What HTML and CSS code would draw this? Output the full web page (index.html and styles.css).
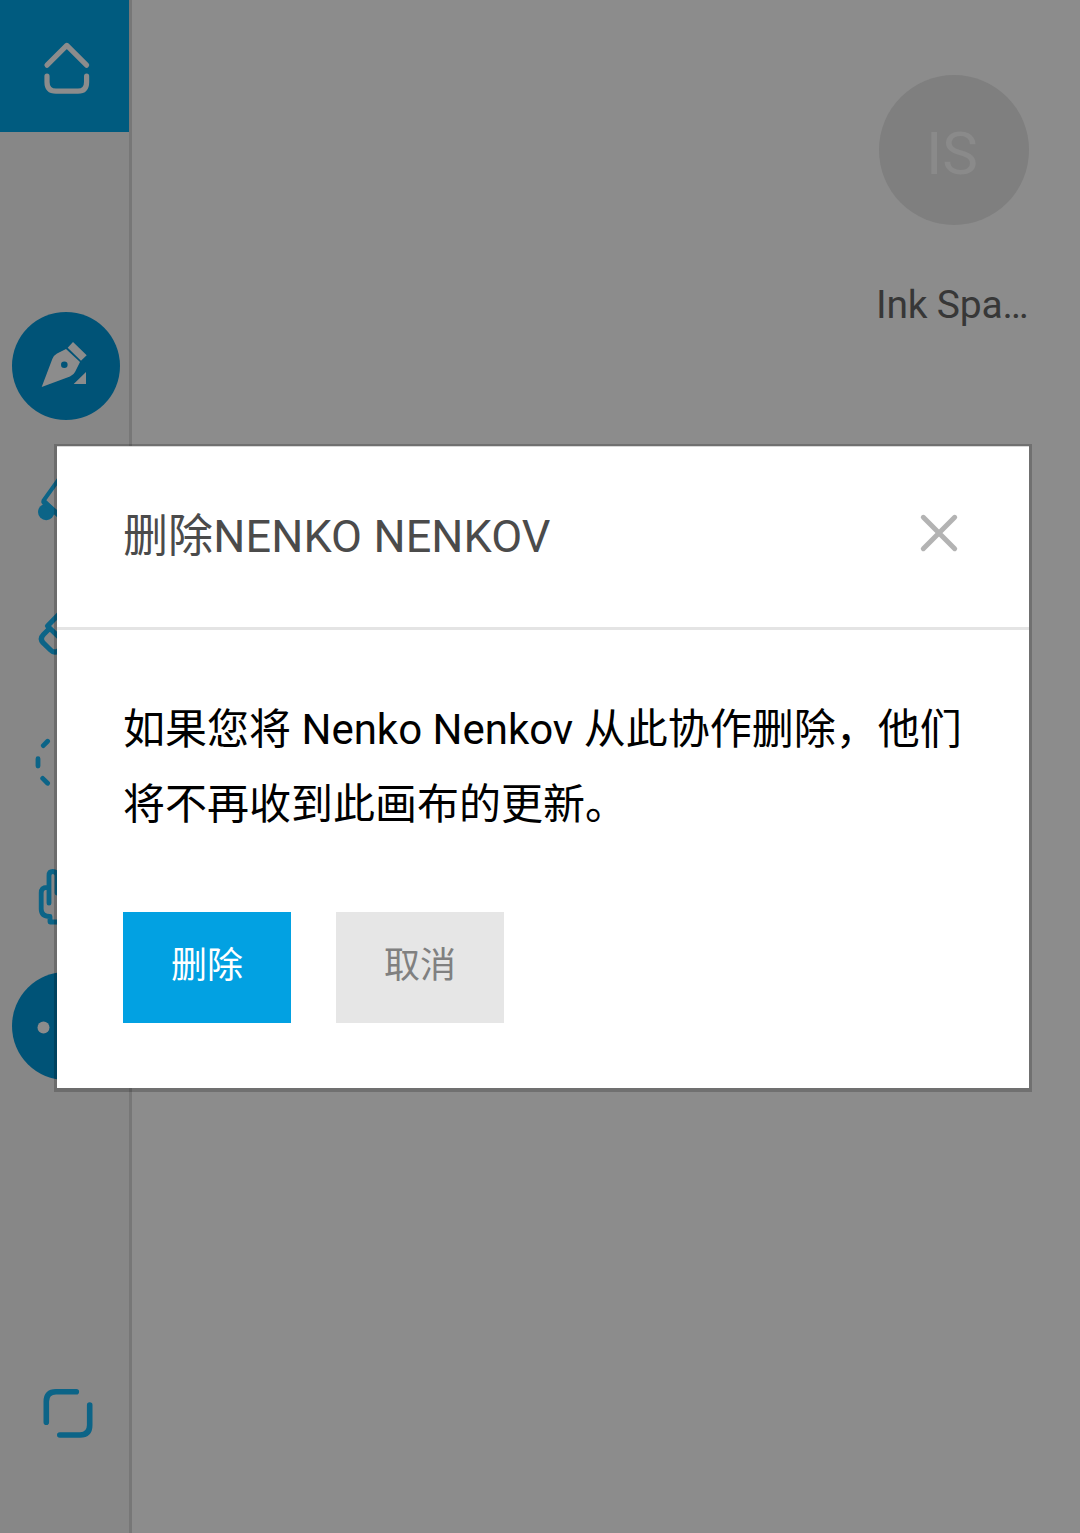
FILE: index.html
```html
<!DOCTYPE html>
<html lang="zh-CN">
<head>
<meta charset="utf-8">
<title>Ink Space</title>
<link rel="stylesheet" href="styles.css">
</head>
<body>
<div class="app">
  <nav class="sidebar">
    <a class="home"><svg class="icon light" viewBox="0 0 132 132"><path d="M47 65.2 66.8 45.4 86.6 65.2M47 76.2V82Q47 91.2 56 91.2H78Q86.6 91.2 86.6 82V76.2"/></svg></a>
    <div class="tools">
      <svg class="icon" viewBox="0 0 132 132"><circle class="disc" cx="66" cy="66" r="54"/><path class="solid" d="M41.7 87 52.3 59Q53.5 55.5 57 53.5L66 49 80 62 75 72Q74 74.5 70 76.5ZM73 42 86.7 55.3 81 60.7 67.7 47.7ZM86 72V84H73.7Z"/><circle class="disc" cx="64.3" cy="64.7" r="3.3"/></svg>
      <svg class="icon" viewBox="0 0 132 132"><path class="thin" d="M64 40 43.6 68.5 60 85 84 60Z"/><circle class="dot-blue" cx="46.2" cy="80" r="8.2"/><path d="M44 70 60 84"/></svg>
      <svg class="icon" viewBox="0 0 132 132"><path d="M68 41 47.5 62 66 80 86 59ZM49.5 64.5 43.5 70.5Q39.5 74.7 43 78.7L50.5 86Q54 89.5 58 87L66 80"/></svg>
      <svg class="icon" viewBox="0 0 132 132"><path class="dash" d="M47.6 45.3 43.3 49.6M38 62.7V70M42.7 82.4 47.6 87.2"/></svg>
      <svg class="icon" viewBox="0 0 132 132"><path class="hand" d="M49 75.2V47.5Q49 43.5 52.8 43.5T57 47.5V65M49 59.4H47Q41.2 59.4 41.2 65V81Q41.2 88.5 50 88.5V94H80"/></svg>
      <svg class="icon" viewBox="0 0 132 132"><circle class="disc" cx="66" cy="66" r="54"/><circle class="dot-light" cx="43.5" cy="67.4" r="6"/><circle class="dot-light" cx="66" cy="67.4" r="6"/><circle class="dot-light" cx="88.5" cy="67.4" r="6"/></svg>
    </div>
    <a class="fullscreen"><svg class="icon" viewBox="0 0 132 132"><path class="frame" d="M46.3 75.2V54.5Q46.3 44.7 56 44.7H76.3M89.7 58V78Q89.7 88 80 88H59.8"/></svg></a>
  </nav>
  <main class="board">
    <div class="profile">
      <div class="avatar">IS</div>
      <div class="name">Ink Spa…</div>
    </div>
  </main>
</div>
<div class="overlay">
  <section class="dialog" role="dialog">
    <header class="dialog-header">
      <h1 class="title">删除NENKO NENKOV</h1>
      <svg class="close" viewBox="0 0 40 40"><path d="M4.3 4.3 35.7 35.7M35.7 4.3 4.3 35.7"/></svg>
    </header>
    <div class="dialog-body">
      <p class="message">如果您将 Nenko Nenkov 从此协作删除，他们将不再收到此画布的更新。</p>
      <div class="actions">
        <button class="button primary">删除</button>
        <button class="button">取消</button>
      </div>
    </div>
  </section>
</div>
</body>
</html>
```

FILE: styles.css
```css
* { box-sizing: border-box; }
body {
  margin: 0;
  height: 1533px;
  overflow: hidden;
  background: #8c8c8c;
  font-family: Roboto, "Noto Sans CJK SC", sans-serif;
}
.app { display: flex; height: 1533px; }
.sidebar {
  display: flex;
  flex-direction: column;
  width: 132px;
  padding-bottom: 54px;
  background: #878787;
  border-right: 3px solid #777;
}
.icon {
  display: block;
  flex: none;
  width: 132px;
  height: 132px;
  fill: none;
  stroke: #0c6487;
  stroke-width: 5.2;
  stroke-linecap: round;
  stroke-linejoin: round;
}
.icon.light { stroke: #8c8c8c; }
.home { height: 132px; background: #005b7f; }
.tools { padding-top: 168px; }
.fullscreen { margin-top: auto; }
.disc { fill: #005377; stroke: none; }
.solid { fill: #8c8c8c; stroke: none; }
.dot-blue { fill: #0c6487; stroke: none; }
.dot-light { fill: #8c8c8c; stroke: none; }
.thin { stroke-width: 4; }
.dash { stroke-width: 4.8; }
.hand { stroke-width: 4.8; }
.frame { stroke-width: 5.6; }
.board { flex: 1; display: flex; justify-content: flex-end; padding: 75px 51px; }
.profile { width: 150px; }
.avatar {
  display: flex;
  align-items: center;
  justify-content: center;
  height: 150px;
  padding: 7px 4px 0 0;
  border-radius: 50%;
  background: #7f7f7f;
  color: #8a8a8a;
  font-size: 60px;
}
.name {
  margin: 57px 0 0 -3px;
  color: #373737;
  font-size: 39px;
  line-height: 46px;
  letter-spacing: -.2px;
  white-space: nowrap;
}
.overlay {
  position: absolute;
  inset: 0;
  padding: 444px 48px 441px 54px;
}
.dialog {
  height: 648px;
  border: 3px solid rgba(0, 0, 0, .2);
  border-top-width: 2px;
  border-bottom-width: 4px;
  background: #fff;
  background-clip: padding-box;
  box-shadow: inset 0 1px #d8d8d8;
}
.dialog-header {
  display: flex;
  align-items: center;
  justify-content: space-between;
  height: 184px;
  padding: 0 70px 7px 66px;
  border-bottom: 3px solid #e4e4e4;
}
.title {
  margin: 0;
  padding-top: 8px;
  color: #4b4b4b;
  font-size: 45px;
  font-weight: 400;
  line-height: 60px;
  letter-spacing: .12px;
  white-space: nowrap;
}
.close { width: 40px; height: 40px; fill: none; stroke: #b3b3b3; stroke-width: 5; stroke-linecap: round; }
.dialog-body { padding: 62px 66px 0; }
.message { width: 845px; margin: 0; color: #000; font-size: 42px; line-height: 75px; }
.actions { display: flex; gap: 45px; margin-top: 70px; }
.button {
  width: 168px;
  height: 111px;
  padding: 0 0 12px;
  border: 0;
  background: #e6e6e6;
  color: #808080;
  font: 36px Roboto, "Noto Sans CJK SC", sans-serif;
}
.button.primary { background: #02a1e2; color: #fff; }
```
